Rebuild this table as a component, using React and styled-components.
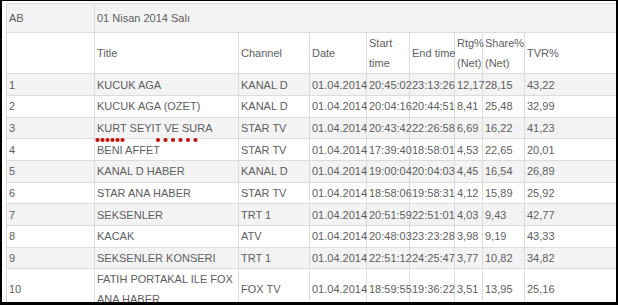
import React from "react";
import styled, { createGlobalStyle } from "styled-components";

const Global = createGlobalStyle`
  html, body { margin: 0; padding: 0; background: #fff; }
  body { font-family: "Liberation Sans", Arial, sans-serif; }
`;

const Frame = styled.div`
  width: 618px;
  height: 305px;
  box-sizing: border-box;
  border-style: solid;
  border-color: #000;
  border-width: 1px 2px 3px 2px;
  padding: 2px 0 0 4px;
  overflow: hidden;
  background: #fff;
`;

const Table = styled.table`
  width: 618px;
  table-layout: fixed;
  border-collapse: collapse;
  font-family: "Liberation Sans", Arial, sans-serif;
  font-size: 11px;
  line-height: 20px;
  color: #5e5e5e;
`;

const Row = styled.tr`
  height: ${(p) => p.$h}px;
  background: ${(p) => (p.$shade ? "#f3f3f3" : "#ffffff")};
`;

const Cell = styled.td`
  border: 1px solid #dcdcdc;
  padding: 0 0 0 2px;
  vertical-align: middle;
  white-space: ${(p) => (p.$wrap ? "normal" : "nowrap")};
  overflow: visible;
  position: ${(p) => (p.$marked ? "relative" : "static")};
`;

const Dots = styled.svg`
  position: absolute;
  left: 0;
  bottom: -5px;
  width: 112px;
  height: 6px;
  overflow: visible;
`;

const widths = [88, 144, 71, 57, 43, 45, 28, 42, 100];

const headers = [
  [""],
  ["Title"],
  ["Channel"],
  ["Date"],
  ["Start", "time"],
  ["End time"],
  ["Rtg%", "(Net)"],
  ["Share%", "(Net)"],
  ["TVR%"],
];

const rows = [
  ["1", "KUCUK AGA", "KANAL D", "01.04.2014", "20:45:02", "23:13:26", "12,17", "28,15", "43,22"],
  ["2", "KUCUK AGA (OZET)", "KANAL D", "01.04.2014", "20:04:16", "20:44:51", "8,41", "25,48", "32,99"],
  ["3", "KURT SEYIT VE SURA", "STAR TV", "01.04.2014", "20:43:42", "22:26:58", "6,69", "16,22", "41,23"],
  ["4", "BENI AFFET", "STAR TV", "01.04.2014", "17:39:40", "18:58:01", "4,53", "22,65", "20,01"],
  ["5", "KANAL D HABER", "KANAL D", "01.04.2014", "19:00:04", "20:04:03", "4,45", "16,54", "26,89"],
  ["6", "STAR ANA HABER", "STAR TV", "01.04.2014", "18:58:06", "19:58:31", "4,12", "15,89", "25,92"],
  ["7", "SEKSENLER", "TRT 1", "01.04.2014", "20:51:59", "22:51:01", "4,03", "9,43", "42,77"],
  ["8", "KACAK", "ATV", "01.04.2014", "20:48:03", "23:23:28", "3,98", "9,19", "43,33"],
  ["9", "SEKSENLER KONSERI", "TRT 1", "01.04.2014", "22:51:12", "24:25:47", "3,77", "10,82", "34,82"],
  ["10", "FATIH PORTAKAL ILE FOX ANA HABER", "FOX TV", "01.04.2014", "18:59:55", "19:36:22", "3,51", "13,95", "25,16"],
];

const dotXs = [2.5, 7.5, 12.5, 17.5, 22.5, 27.5, 63, 70.5, 78, 85.5, 93, 100.5];

function Marks() {
  return (
    <Dots viewBox="0 0 112 6">
      {dotXs.map((x) => (
        <circle key={x} cx={x} cy={3} r={2.1} fill="#c8100c" />
      ))}
    </Dots>
  );
}

export default function App() {
  return (
    <>
      <Global />
      <Frame>
        <Table>
          <colgroup>
            {widths.map((w, i) => (
              <col key={i} style={{ width: w }} />
            ))}
          </colgroup>
          <tbody>
            <Row $h={28.7} $shade>
              <Cell>AB</Cell>
              <Cell colSpan={8}>01 Nisan 2014 Salı</Cell>
            </Row>
            <Row $h={41.6}>
              {headers.map((lines, i) => (
                <Cell key={i}>
                  {lines.map((l, j) => (
                    <React.Fragment key={j}>
                      {j > 0 && <br />}
                      {l}
                    </React.Fragment>
                  ))}
                </Cell>
              ))}
            </Row>
            {rows.map((r, ri) => (
              <Row key={ri} $h={21.7} $shade={ri % 2 === 0}>
                {r.map((v, ci) => (
                  <Cell key={ci} $wrap={ci === 1} $marked={ri === 2 && ci === 1}>
                    {v}
                    {ri === 2 && ci === 1 && <Marks />}
                  </Cell>
                ))}
              </Row>
            ))}
          </tbody>
        </Table>
      </Frame>
    </>
  );
}
